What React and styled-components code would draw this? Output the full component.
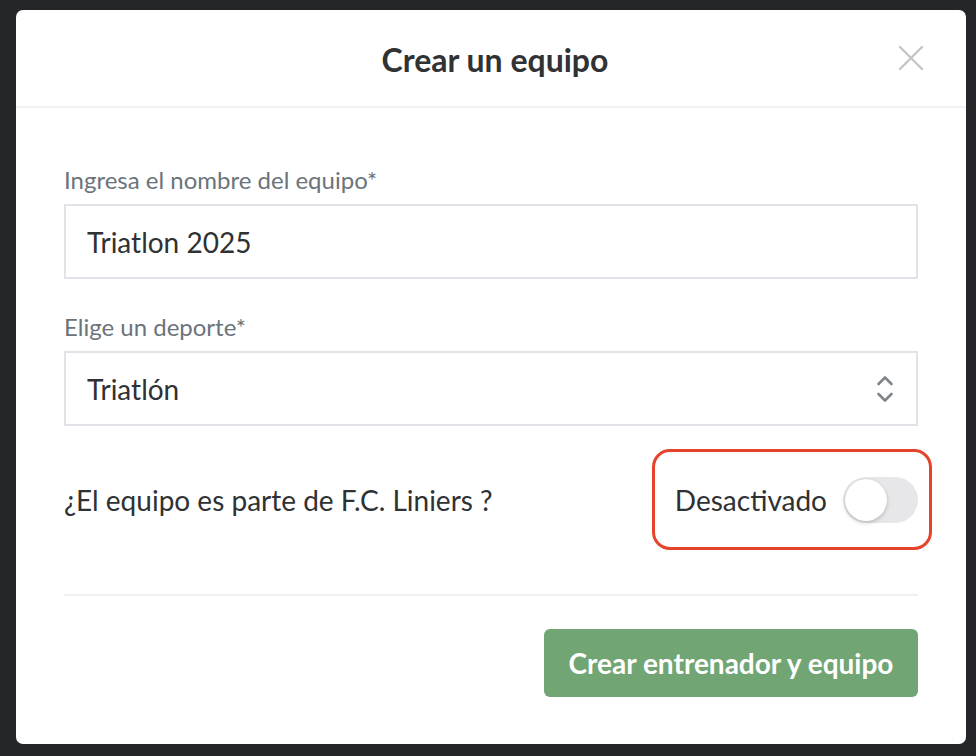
import React from "react";
import styled, { createGlobalStyle } from "styled-components";

const Global = createGlobalStyle`
  html, body { margin: 0; padding: 0; }
  body {
    background: #25262a;
    font-family: Lato, "Noto Sans", sans-serif;
    width: 976px;
    height: 756px;
    overflow: hidden;
  }
`;

const Screen = styled.div`
  width: 976px;
  height: 756px;
  padding: 10px 10px 0 16px;
  box-sizing: border-box;
  position: relative;
`;

const Modal = styled.div`
  width: 950px;
  height: 734px;
  background: #fff;
  border-radius: 7px;
  display: flex;
  flex-direction: column;
  overflow: hidden;
`;

const Header = styled.div`
  height: 98px;
  border-bottom: 2px solid #f1f1f6;
  box-sizing: border-box;
  display: grid;
  grid-template-columns: 1fr auto 1fr;
  align-items: center;
  padding: 0 40px 0 48px;
`;

const Title = styled.h2`
  grid-column: 2;
  margin: 0;
  font-size: 32px;
  font-weight: 700;
  color: #303234;
  padding-top: 2px;
`;

const Close = styled.button`
  grid-column: 3;
  justify-self: end;
  border: 0;
  background: none;
  padding: 0;
  width: 30px;
  height: 30px;
  display: flex;
  align-items: center;
  justify-content: center;
  cursor: pointer;
`;

const Body = styled.div`
  padding: 59px 48px 0;
  display: flex;
  flex-direction: column;
`;

const Label = styled.label`
  display: block;
  font-size: 24px;
  line-height: 26px;
  color: #6b747b;
  margin-bottom: 11px;
`;

const Box = styled.div`
  height: 75px;
  box-sizing: border-box;
  border: 2px solid #e0e3ea;
  display: flex;
  align-items: center;
  justify-content: space-between;
  padding: 0 22px 0 21px;
  font-size: 28px;
  color: #2f3133;
  margin-bottom: ${(p) => p.$mb || 0}px;
`;

const Row = styled.div`
  margin-top: 51px;
  height: 46px;
  display: flex;
  align-items: center;
  justify-content: space-between;
`;

const Question = styled.span`
  font-size: 28px;
  color: #2f3133;
`;

const ToggleGroup = styled.div`
  position: relative;
  display: flex;
  align-items: center;
  gap: 16px;
  font-size: 28px;
  color: #2f3133;
`;

const Highlight = styled.div`
  position: absolute;
  left: -23px;
  right: -14px;
  top: -28px;
  bottom: -27px;
  border: 3px solid #e5432b;
  border-radius: 18px;
  pointer-events: none;
`;

const Track = styled.div`
  width: 75px;
  height: 46px;
  border-radius: 23px;
  background: #e7e7e9;
  position: relative;
`;

const Knob = styled.div`
  position: absolute;
  left: 2px;
  top: 2px;
  width: 42px;
  height: 42px;
  border-radius: 50%;
  background: #fff;
  box-shadow: 0 2px 4px rgba(0, 0, 0, 0.18), 0 0 1px rgba(0, 0, 0, 0.15);
`;

const Divider = styled.hr`
  margin: 71px 0 0;
  border: 0;
  height: 2px;
  background: #f0f0f4;
`;

const Footer = styled.div`
  display: flex;
  justify-content: flex-end;
  margin-top: 33px;
`;

const PrimaryButton = styled.button`
  width: 374px;
  height: 68px;
  border: 0;
  border-radius: 6px;
  background: #71a574;
  color: #fff;
  font-family: Lato, "Noto Sans", sans-serif;
  font-size: 28px;
  font-weight: 700;
  padding: 0;
  cursor: pointer;
`;

function XIcon() {
  return (
    <svg width="26" height="26" viewBox="0 0 26 26">
      <path d="M2 2 L24 24 M24 2 L2 24" stroke="#c3c5c7" strokeWidth="2.4" strokeLinecap="round" fill="none" />
    </svg>
  );
}

function Chevrons() {
  return (
    <svg width="18" height="32" viewBox="0 0 18 32">
      <path d="M2.5 11 L9 4.5 L15.5 11" stroke="#7d868d" strokeWidth="2.6" strokeLinecap="round" strokeLinejoin="round" fill="none" />
      <path d="M2.5 21 L9 27.5 L15.5 21" stroke="#7d868d" strokeWidth="2.6" strokeLinecap="round" strokeLinejoin="round" fill="none" />
    </svg>
  );
}

export default function App() {
  return (
    <>
      <Global />
      <Screen>
        <Modal>
          <Header>
            <Title>Crear un equipo</Title>
            <Close aria-label="Cerrar">
              <XIcon />
            </Close>
          </Header>
          <Body>
            <Label>Ingresa el nombre del equipo*</Label>
            <Box $mb={35}>Triatlon 2025</Box>
            <Label>Elige un deporte*</Label>
            <Box>
              <span>Triatlón</span>
              <Chevrons />
            </Box>
            <Row>
              <Question>¿El equipo es parte de F.C. Liniers ?</Question>
              <ToggleGroup>
                <span>Desactivado</span>
                <Track>
                  <Knob />
                </Track>
                <Highlight />
              </ToggleGroup>
            </Row>
            <Divider />
            <Footer>
              <PrimaryButton>Crear entrenador y equipo</PrimaryButton>
            </Footer>
          </Body>
        </Modal>
      </Screen>
    </>
  );
}
